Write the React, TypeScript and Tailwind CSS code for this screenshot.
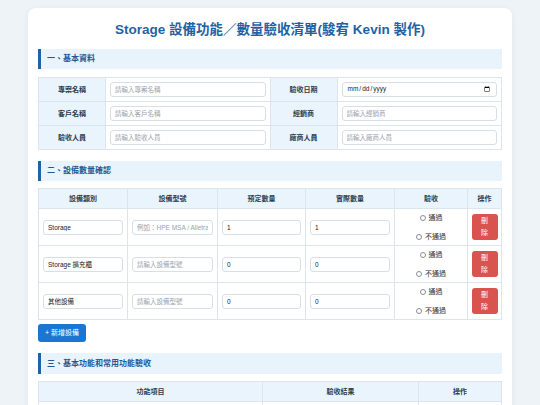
import React from 'react';

const inputCls =
  'block w-full h-[15px] border border-[#d6dee6] rounded-[3px] px-[4px] text-[6.5px] text-[#222] bg-white outline-none placeholder:text-[#9aa3ad]';

const SectionHeader: React.FC<{ title: string; className?: string }> = ({ title, className }) => (
  <div
    className={`h-[20px] flex items-center border-l-[3px] border-[#1f63a6] bg-[#e8f3fc] pl-[6px] text-[8px] font-bold text-[#1f5a96] ${className ?? ''}`}
  >
    {title}
  </div>
);

const Radio: React.FC<{ label: string }> = ({ label }) => (
  <label className="flex items-center gap-[3px] leading-[12px] text-[7px] text-[#333]">
    <span className="w-[6px] h-[6px] rounded-full border border-[#8a8f96] bg-white" />
    {label}
  </label>
);

const DeleteButton: React.FC = () => (
  <button className="block mx-auto w-[26px] px-[7px] py-[1px] rounded-[3px] bg-[#d9534f] text-white text-[7px] leading-[12px] break-all">
    刪除
  </button>
);

const basicRows = [
  ['專案名稱', '請輸入專案名稱', '驗收日期', ''],
  ['客戶名稱', '請輸入客戶名稱', '經銷商', '請輸入經銷商'],
  ['驗收人員', '請輸入驗收人員', '廠商人員', '請輸入廠商人員'],
];

const equipment = [
  { type: 'Storage', model: '例如：HPE MSA / Alletra', planned: '1', actual: '1' },
  { type: 'Storage 擴充櫃', model: '請輸入設備型號', planned: '0', actual: '0' },
  { type: '其他設備', model: '請輸入設備型號', planned: '0', actual: '0' },
];

const thCls = 'border border-[#dce5ee] bg-[#eaf4fd] text-[7px] leading-[10px] font-bold text-[#2c3e50] h-[20px]';
const tdCls = 'border border-[#dce5ee] px-[4px] leading-none';
const labelCls = 'border border-[#dce5ee] bg-[#eaf4fd] text-center text-[7px] leading-[10px] font-bold text-[#2c3e50]';

export default function App() {
  return (
    <div
      className="h-[405px] overflow-hidden bg-[#eef3f8] pt-[8px]"
      style={{ fontFamily: '"Liberation Sans", "Noto Sans CJK TC", sans-serif' }}
    >
      <div className="mx-[28px] bg-white rounded-[8px] shadow-[0_1px_6px_rgba(0,0,0,0.06)] px-[10px] pt-[12px] pb-[20px]">
        <h1 className="text-center text-[13.5px] font-bold text-[#1f63a6] leading-[20px]">
          Storage 設備功能／數量驗收清單(駿宥 Kevin 製作)
        </h1>

        {/* 基本資料 */}
        <SectionHeader title="一、基本資料" className="mt-[9px]" />
        <table className="w-full mt-[8px] border-collapse table-fixed">
          <colgroup>
            <col className="w-[67px]" />
            <col />
            <col className="w-[67px]" />
            <col />
          </colgroup>
          <tbody>
            {basicRows.map((r) => (
              <tr key={r[0]} className="h-[24px]">
                <td className={labelCls}>{r[0]}</td>
                <td className={tdCls}>
                  <input className={inputCls} placeholder={r[1]} />
                </td>
                <td className={labelCls}>{r[2]}</td>
                <td className={tdCls}>
                  {r[2] === '驗收日期' ? (
                    <input type="date" className={inputCls} />
                  ) : (
                    <input className={inputCls} placeholder={r[3]} />
                  )}
                </td>
              </tr>
            ))}
          </tbody>
        </table>

        {/* 設備數量確認 */}
        <SectionHeader title="二、設備數量確認" className="mt-[11px]" />
        <table className="w-full mt-[7px] border-collapse table-fixed">
          <colgroup>
            <col className="w-[89px]" />
            <col className="w-[90px]" />
            <col className="w-[88px]" />
            <col className="w-[89px]" />
            <col className="w-[73px]" />
            <col />
          </colgroup>
          <thead>
            <tr>
              <th className={thCls}>設備類別</th>
              <th className={thCls}>設備型號</th>
              <th className={thCls}>預定數量</th>
              <th className={thCls}>實際數量</th>
              <th className={thCls}>驗收</th>
              <th className={thCls}>操作</th>
            </tr>
          </thead>
          <tbody>
            {equipment.map((e) => (
              <tr key={e.type} className="h-[37px]">
                <td className={tdCls}>
                  <input className={inputCls} defaultValue={e.type} />
                </td>
                <td className={tdCls}>
                  <input className={inputCls} placeholder={e.model} />
                </td>
                <td className={tdCls}>
                  <input className={inputCls} defaultValue={e.planned} />
                </td>
                <td className={tdCls}>
                  <input className={inputCls} defaultValue={e.actual} />
                </td>
                <td className="border border-[#dce5ee] leading-none">
                  <div className="flex flex-col items-center gap-[7px]">
                    <Radio label="通過" />
                    <Radio label="不通過" />
                  </div>
                </td>
                <td className="border border-[#dce5ee] leading-none">
                  <DeleteButton />
                </td>
              </tr>
            ))}
          </tbody>
        </table>

        <button className="block mt-[4px] h-[18px] px-[7px] rounded-[3px] bg-[#1976d2] text-white text-[7px]">
          + 新增設備
        </button>

        {/* 基本功能 */}
        <SectionHeader title="三、基本功能和常用功能驗收" className="mt-[11px] h-[21px]" />
        <table className="w-full mt-[7px] border-collapse table-fixed">
          <colgroup>
            <col className="w-[224px]" />
            <col className="w-[156px]" />
            <col />
          </colgroup>
          <thead>
            <tr>
              <th className={thCls}>功能項目</th>
              <th className={thCls}>驗收結果</th>
              <th className={thCls}>操作</th>
            </tr>
          </thead>
          <tbody>
            <tr className="h-[44px]">
              <td className={tdCls}>
                <input className={inputCls} defaultValue="開機自我檢測" />
              </td>
              <td className="border border-[#dce5ee] leading-none">
                <div className="flex flex-col items-center gap-[7px] pt-[10px]">
                  <Radio label="通過" />
                  <Radio label="不通過" />
                </div>
              </td>
              <td className="border border-[#dce5ee] align-top pt-[3px] leading-none">
                <DeleteButton />
              </td>
            </tr>
          </tbody>
        </table>
      </div>
    </div>
  );
}
